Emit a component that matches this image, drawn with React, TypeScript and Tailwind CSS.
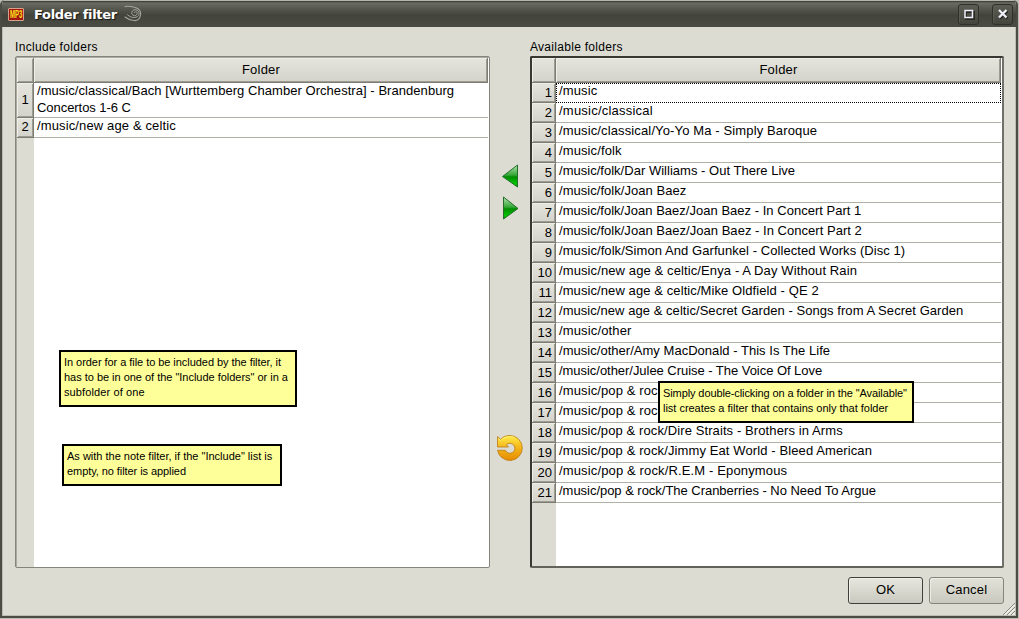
import React from "react";

const available: [string, string][] = [
  ["/music", "tracking-[0.13px]"],
  ["/music/classical", "tracking-[0.22px]"],
  ["/music/classical/Yo-Yo Ma - Simply Baroque", "tracking-[0.13px]"],
  ["/music/folk", "tracking-[0.11px]"],
  ["/music/folk/Dar Williams - Out There Live", "tracking-[0.02px]"],
  ["/music/folk/Joan Baez", "tracking-[0.04px]"],
  ["/music/folk/Joan Baez/Joan Baez - In Concert Part 1", "tracking-[0.02px]"],
  ["/music/folk/Joan Baez/Joan Baez - In Concert Part 2", "tracking-[0.03px]"],
  ["/music/folk/Simon And Garfunkel - Collected Works (Disc 1)", "tracking-[0.07px]"],
  ["/music/new age & celtic/Enya - A Day Without Rain", "tracking-[0.11px]"],
  ["/music/new age & celtic/Mike Oldfield - QE 2", "tracking-[0.09px]"],
  ["/music/new age & celtic/Secret Garden - Songs from A Secret Garden", "tracking-[0.05px]"],
  ["/music/other", "tracking-[0.14px]"],
  ["/music/other/Amy MacDonald - This Is The Life", "tracking-[0.03px]"],
  ["/music/other/Julee Cruise - The Voice Of Love", "tracking-[-0.04px]"],
  ["/music/pop & rock", "tracking-[0.12px]"],
  ["/music/pop & rock", "tracking-[0.12px]"],
  ["/music/pop & rock/Dire Straits - Brothers in Arms", "tracking-[0.1px]"],
  ["/music/pop & rock/Jimmy Eat World - Bleed American", "tracking-[0.11px]"],
  ["/music/pop & rock/R.E.M - Eponymous", "tracking-[0.14px]"],
  ["/music/pop & rock/The Cranberries - No Need To Argue", "tracking-[-0.03px]"],
];

const bevel =
  "border-r border-b border-[#7d7d74] bg-linear-to-b from-[#e5e5dd] to-[#d3d3cb] shadow-[inset_1px_1px_0_#efefe8,inset_-1px_-1px_0_#9c9c93]";

function HeaderRow({ corner }: { corner: string }) {
  return (
    <div className="flex h-[25px] shrink-0">
      <div className={`${corner} ${bevel} shrink-0`} />
      <div className={`${bevel} flex-1 pt-[3px] pl-px text-center leading-[18px] tracking-[0.2px]`}>Folder</div>
    </div>
  );
}

function WindowButton({ children, label }: { children: React.ReactNode; label: string }) {
  return (
    <button
      aria-label={label}
      className="flex h-[21px] w-[21px] items-center justify-center rounded-[3px] border border-[#30302b] bg-linear-to-b from-[#5c5d53] to-[#44453d] shadow-[inset_1px_1px_0_#5b5c52]"
    >
      {children}
    </button>
  );
}

function Note({ className, lines }: { className: string; lines: [string, string][] }) {
  return (
    <div className={`${className} absolute border-2 border-black bg-[#ffff99] pt-[3px] pl-[3px] text-[11px] leading-[15px] whitespace-nowrap`}>
      {lines.map(([text, spacing]) => (
        <div key={text} className={spacing}>{text}</div>
      ))}
    </div>
  );
}

function TitleBar() {
  return (
    <div className="flex h-[27px] shrink-0 items-center border-t border-[#b4b4aa] bg-[linear-gradient(#34352f_0px,#6b6c61_2px,#55564c_8px,#43443c_14px,#4a4b43_26px)] pr-[3px] pl-[6px]">
      <div className="flex h-[13px] w-[16px] items-center rounded-[1px] border border-[#d5a28c] bg-[#a3160f] pl-px text-[10px] leading-[11px] font-bold text-[#ffe51c]">
        <span className="inline-block w-[21px] shrink-0 origin-left scale-x-[0.6]">MP3</span>
      </div>
      <div className="mt-px ml-[10px] w-[84px] font-['DejaVu_Sans'] text-[13px] leading-[18px] font-bold tracking-[-0.3px] whitespace-nowrap text-white [text-shadow:1px_1px_1px_#151512]">Folder filter</div>
      <svg className="-mt-px ml-[6px]" width="18" height="18" viewBox="0 0 18 18" fill="none" stroke="#a5a59b" strokeLinecap="round">
        <path d="M1 1.500C5 .8 9 1.500 12.500 3c3.500 1.500 4.500 4 4 7C16 14 13.500 16 10 15.500c-3.500-.3-6.500-1.500-9-3.500" strokeWidth="1.100" />
        <path d="M3.500 9.800C6 12.200 9 13 12 12.200c2.500-.7 3.500-2.500 3-4.500-.5-2.200-3-3.500-5.200-2.700-2.500 1-2.700 4-.8 5.200 2 1.200 4.200 0 4.200-1.900 0-1.800-2.700-2.200-3-.5" />
      </svg>
      <div className="flex-1" />
      <div className="flex gap-[13px]">
        <WindowButton label="Maximize">
          <svg width="12" height="11" viewBox="0 0 12 11" fill="none"><path d="M3 3h8v7H3z" stroke="#292924" strokeWidth="2" /><path d="M2 1.500h7.500v7H2z" stroke="#f0f0fa" strokeWidth="1.500" /></svg>
        </WindowButton>
        <WindowButton label="Close">
          <svg width="12" height="12" viewBox="0 0 12 12" fill="none"><path d="m3 3 7.500 7.500m0-7.500L3 10.500" stroke="#272722" strokeWidth="2.500" /><path d="m2 2 7.500 7.500m0-7.500L2 9.500" stroke="#f0f0fa" strokeWidth="2.300" /></svg>
        </WindowButton>
      </div>
    </div>
  );
}

export default function App() {
  return (
    <div className="h-[619px] w-[1019px] overflow-hidden bg-[#bdbdb3] font-['Liberation_Sans',sans-serif] text-[13px] text-black">
      <div className="relative flex h-[618px] w-[1018px] flex-col overflow-hidden rounded-t-[5px] border-r-2 border-b-2 border-l-2 border-[#4b4c43] bg-[#dcdcd3]">
        <TitleBar />
        <div className="flex flex-1 border-x border-b border-[#bcbcb2] pl-[12px]">
          <div className="w-[475px] shrink-0 pt-[11px]">
            <div className="h-[18px] text-[12px] leading-[18px] tracking-[0.32px]">Include folders</div>
            <div className="relative flex h-[512px] flex-col rounded-[2px] border border-[#85857c] bg-white shadow-[inset_1px_1px_0_#aaaaa1]">
              <div className="flex flex-1 flex-col pt-px pr-px pl-px">
                <HeaderRow corner="w-[17px]" />
                <div className="flex h-[35px] shrink-0">
                  <div className={`${bevel} w-[17px] shrink-0 pt-px text-center leading-[32px]`}>1</div>
                  <div className="flex-1 border-b border-[#b0b0a7] pl-[3px] leading-[17px] whitespace-nowrap">
                    <div className="-mt-px tracking-[0.05px]">/music/classical/Bach [Wurttemberg Chamber Orchestra] - Brandenburg</div>
                    <div className="tracking-[-0.05px]">Concertos 1-6 C</div>
                  </div>
                </div>
                <div className="flex h-[20px] shrink-0">
                  <div className={`${bevel} w-[17px] shrink-0 text-center leading-[18px]`}>2</div>
                  <div className="flex-1 border-b border-[#b0b0a7] pl-[3px] leading-[15px] tracking-[0.13px]">/music/new age &amp; celtic</div>
                </div>
                <div className="w-[17px] flex-1 bg-[#dcdcd3]" />
              </div>
              <Note className="top-[293px] left-[43px] h-[57px] w-[238px]" lines={[["In order for a file to be included by the filter, it", "tracking-[-0.05px]"], ['has to be in one of the "Include folders" or in a', "tracking-[-0.02px]"], ["subfolder of one", "tracking-[0.12px]"]]} />
              <Note className="top-[387px] left-[46px] h-[42px] w-[220px]" lines={[['As with the note filter, if the "Include" list is', "tracking-[0px]"], ["empty, no filter is applied", "tracking-[-0.07px]"]]} />
            </div>
          </div>

          <div className="flex w-[40px] shrink-0 flex-col items-center pt-[137px]">
            <svg width="18" height="25" viewBox="0 0 18 25">
              <defs><linearGradient id="green" x2="0" y2="1"><stop stopColor="#b1e3af" /><stop offset=".46" stopColor="#35a637" /><stop offset=".54" stopColor="#008d00" /><stop offset=".85" stopColor="#00c500" /><stop offset="1" stopColor="#009400" /></linearGradient></defs>
              <path d="M1.500 12.500 16.500 1v22z" fill="url(#green)" stroke="#256d2a" />
            </svg>
            <svg className="mt-[7px]" width="18" height="25" viewBox="0 0 18 25"><path d="M17 12.500 2.500 1v22z" fill="url(#green)" stroke="#256d2a" /></svg>
            <svg className="mt-[213px]" width="28" height="28" viewBox="0 0 28 28">
              <defs><linearGradient id="gold" x2="0" y2="1"><stop stopColor="#ffee4c" /><stop offset=".45" stopColor="#f5b91c" /><stop offset="1" stopColor="#e58b00" /></linearGradient></defs>
              <path d="M1.500 2.500 4.500 5.200C7 2.800 10 1.500 14 1.500A12.500 12.500 0 1 1 1.500 16.300H9.300A5 5 0 1 0 10.300 10.800L12.500 13H1.500Z" fill="url(#gold)" stroke="#bd7a12" strokeWidth=".8" />
              <path d="M2.400 4.500 4.500 6.500C8 3 13 1.700 18 3.300" fill="none" stroke="#fff27a" strokeWidth=".8" />
            </svg>
          </div>

          <div className="w-[474px] shrink-0 pt-[11px]">
            <div className="h-[18px] text-[12px] leading-[18px] tracking-[0.29px]">Available folders</div>
            <div className="relative flex h-[512px] flex-col rounded-[2px] border-2 border-t-[#383832] border-r-[#70716a] border-b-[#62635b] border-l-[#383832] bg-white">
              <div className="flex flex-1 flex-col pr-px">
                <HeaderRow corner="w-[24px]" />
                {available.map(([path, spacing], index) => (
                  <div key={index} className="flex h-[20px] shrink-0">
                    <div className={`${bevel} w-[24px] shrink-0 pt-px pr-[3px] text-right leading-[18px]`}>{index + 1}</div>
                    <div className={index === 0 ? "flex-1 border border-dotted border-black" : "flex-1 border-b border-[#b0b0a7]"}>
                      <div className={`${spacing} ${index === 0 ? "-mt-px pl-[2px]" : "pl-[3px]"} leading-[15px] whitespace-nowrap`}>{path}</div>
                    </div>
                  </div>
                ))}
                <div className="w-[24px] flex-1 bg-[#dcdcd3]" />
              </div>
              <Note className="top-[323px] left-[126px] h-[42px] w-[256px]" lines={[['Simply double-clicking on a folder in the "Available"', "tracking-[-0.1px]"], ["list creates a filter that contains only that folder", "tracking-[-0.02px]"]]} />
            </div>
            <div className="mt-[9px] flex justify-end gap-[6px] tracking-[0.2px]">
              <button className="h-[27px] w-[75px] rounded-[3px] border border-[#3f4039] bg-linear-to-b from-[#e7e7df] to-[#c9c9bf] pb-[2px] shadow-[inset_1px_1px_0_#efefe9]">OK</button>
              <button className="h-[27px] w-[75px] rounded-[3px] border border-[#84857b] bg-linear-to-b from-[#e2e2d9] to-[#c9c9bf] pb-[2px] shadow-[inset_1px_1px_0_#ecece5]">Cancel</button>
            </div>
          </div>
        </div>
        <svg className="absolute right-px bottom-px" width="12" height="13" viewBox="0 0 12 13"><path d="M0 13 12 1M4 13l8-8M8 13l4-4" stroke="#88887f" /><path d="m1.500 13 10.500-10.500M5.500 13l6.500-6.500M9.500 13l2.500-2.500" stroke="#fff" /></svg>
      </div>
    </div>
  );
}
